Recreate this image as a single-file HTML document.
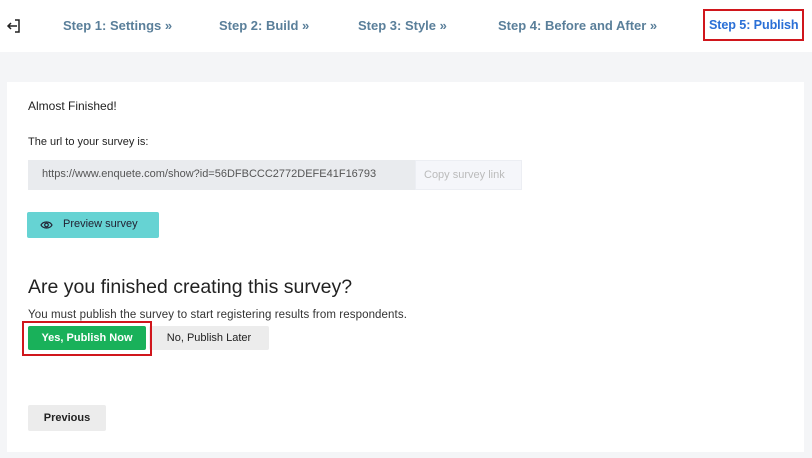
<!DOCTYPE html>
<html><head><style>
*{margin:0;padding:0;box-sizing:border-box}
body{width:812px;height:458px;background:#f4f5f7;font-family:"Liberation Sans",sans-serif;position:relative;overflow:hidden;color:#222}
.hdr{position:absolute;left:0;top:0;width:812px;height:52px;background:#fff}
.st{position:absolute;top:18px;font-size:13px;font-weight:bold;color:#5a7f9a;white-space:nowrap}
.st5{color:#2a6fd6;font-size:12.6px;letter-spacing:-0.1px}
.red{position:absolute;border:2px solid #d0161c}
.card{position:absolute;left:7px;top:82px;width:797px;height:370px;background:#fff}
.a{position:absolute;white-space:nowrap}
</style></head><body>
<div class="hdr">
<svg style="position:absolute;left:6px;top:18px" width="16" height="16" viewBox="0 0 16 16" fill="none" stroke="#222" stroke-width="1.5"><path d="M9 2h4v12H9"/><path d="M11 8H2M5 5L2 8l3 3"/></svg>
<div class="st" style="left:63px">Step 1: Settings &#187;</div>
<div class="st" style="left:219px">Step 2: Build &#187;</div>
<div class="st" style="left:358px">Step 3: Style &#187;</div>
<div class="st" style="left:498px">Step 4: Before and After &#187;</div>
<div class="st st5" style="left:709px">Step 5: Publish</div>
<div class="red" style="left:703px;top:9px;width:101px;height:32px"></div>
</div>
<div class="card"></div>
<div class="a" style="left:28px;top:99px;font-size:12px">Almost Finished!</div>
<div class="a" style="left:28px;top:136px;font-size:11px">The url to your survey is:</div>
<div class="a" style="left:28px;top:160px;width:387px;height:30px;background:#e9ebee;font-size:11px;color:#555;padding:8px 0 0 14px;overflow:hidden">https://www.enquete.com/show?id=56DFBCCC2772DEFE41F16793</div>
<div class="a" style="left:415px;top:160px;width:107px;height:30px;background:#f5f6fa;border:1px solid #eceef3;font-size:11px;color:#bbb;padding:8px 0 0 8px">Copy survey link</div>
<div class="a" style="left:27px;top:212px;width:132px;height:26px;background:#66d3d3;border-radius:2px;font-size:11px;color:#223;padding:6px 0 0 36px">Preview survey
<svg style="position:absolute;left:13px;top:7px" width="13" height="12" viewBox="0 0 13 12" fill="none" stroke="#223" stroke-width="1.2"><path d="M1 6C3 2 10 2 12 6C10 10 3 10 1 6Z"/><circle cx="6.5" cy="6" r="1.8"/></svg></div>
<div class="a" style="left:28px;top:276px;font-size:19.5px;color:#222">Are you finished creating this survey?</div>
<div class="a" style="left:28px;top:309px;font-size:11.5px;color:#333;letter-spacing:0.1px">You must publish the survey to start registering results from respondents.</div>
<div class="a" style="left:28px;top:326px;width:118px;height:24px;background:#19b15a;border-radius:2px;color:#fff;font-size:11px;font-weight:bold;text-align:center;line-height:24px">Yes, Publish Now</div>
<div class="a" style="left:149px;top:326px;width:120px;height:24px;background:#ececec;border-radius:2px;color:#222;font-size:11px;text-align:center;line-height:24px">No, Publish Later</div>
<div class="red" style="left:22px;top:321px;width:130px;height:35px"></div>
<div class="a" style="left:28px;top:405px;width:78px;height:26px;background:#ececec;border-radius:2px;color:#222;font-size:11px;font-weight:bold;text-align:center;line-height:26px">Previous</div>
</body></html>
